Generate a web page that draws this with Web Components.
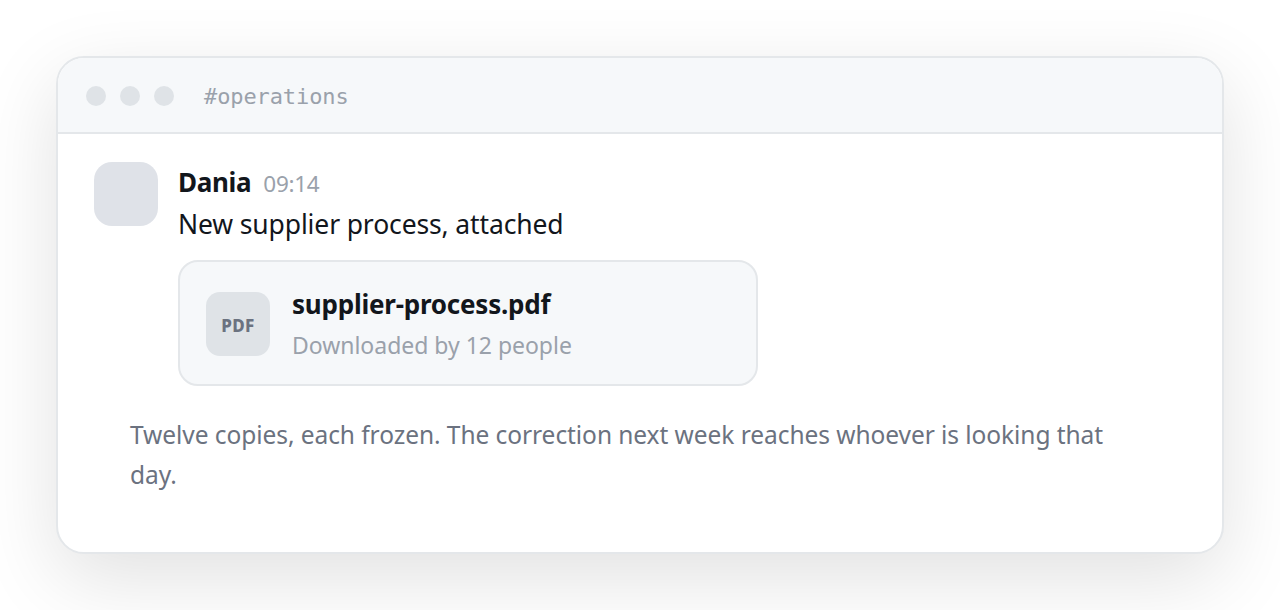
<!DOCTYPE html>
<html lang="en">
<head>
<meta charset="UTF-8">
<title>#operations</title>
<style>
  body {
    margin: 0;
    padding: 56px;
    height: 610px;
    box-sizing: border-box;
    overflow: hidden;
    background: #fff;
    font-family: "Noto Sans", "Open Sans", sans-serif;
    color: #12161c;
  }
</style>
</head>
<body>
  <chat-window channel="#operations">
    <chat-message author="Dania" time="09:14">
      New supplier process, attached
      <file-card slot="attachment" type="PDF" name="supplier-process.pdf">Downloaded by 12 people</file-card>
    </chat-message>
    <chat-note>Twelve copies, each frozen. The correction next week reaches whoever is looking that day.</chat-note>
  </chat-window>

<script>
  class ChatWindow extends HTMLElement {
    constructor() {
      super();
      this.attachShadow({ mode: "open" });
    }

    connectedCallback() {
      this.shadowRoot.innerHTML = `
        <style>
          :host {
            display: block;
            box-sizing: border-box;
            height: 498px;
            border: 2px solid #e4e7ea;
            border-radius: 28px;
            overflow: hidden;
            background: #fff;
            box-shadow: 0 24px 80px rgba(0, 0, 0, 0.12);
          }
          header {
            display: flex;
            align-items: center;
            gap: 14px;
            height: 72px;
            padding: 2px 28px 0;
            background: #f6f8fa;
            border-bottom: 2px solid #e4e7ea;
          }
          .dot {
            width: 20px;
            height: 20px;
            border-radius: 50%;
            background: #dfe3e7;
          }
          .channel {
            margin-left: 16px;
            padding-top: 1px;
            font: 22px/30px "DejaVu Sans Mono", monospace;
            color: #9aa1ab;
            letter-spacing: -0.1px;
          }
          .body {
            padding: 28px 36px;
          }
        </style>
        <header>
          <span class="dot"></span>
          <span class="dot"></span>
          <span class="dot"></span>
          <span class="channel">${this.getAttribute("channel")}</span>
        </header>
        <div class="body"><slot></slot></div>
      `;
    }
  }

  class ChatMessage extends HTMLElement {
    constructor() {
      super();
      this.attachShadow({ mode: "open" });
    }

    connectedCallback() {
      this.shadowRoot.innerHTML = `
        <style>
          :host {
            display: flex;
            align-items: flex-start;
            gap: 20px;
          }
          .avatar {
            flex: none;
            width: 64px;
            height: 64px;
            border-radius: 18px;
            background: #dfe2e8;
          }
          .meta {
            display: flex;
            align-items: baseline;
            gap: 12px;
            height: 41px;
            line-height: 40px;
          }
          .author {
            font-size: 26px;
            font-weight: 700;
            letter-spacing: -0.3px;
          }
          .time {
            font-size: 22.5px;
            color: #9aa1ab;
            letter-spacing: -0.3px;
          }
          .text {
            height: 43px;
            line-height: 42px;
            font-size: 26.5px;
            letter-spacing: -0.13px;
            white-space: nowrap;
          }
          ::slotted(file-card) {
            margin-top: 14px;
          }
        </style>
        <div class="avatar"></div>
        <div>
          <div class="meta">
            <span class="author">${this.getAttribute("author")}</span>
            <span class="time">${this.getAttribute("time")}</span>
          </div>
          <div class="text"><slot></slot></div>
          <slot name="attachment"></slot>
        </div>
      `;
    }
  }

  class FileCard extends HTMLElement {
    constructor() {
      super();
      this.attachShadow({ mode: "open" });
    }

    connectedCallback() {
      this.shadowRoot.innerHTML = `
        <style>
          :host {
            display: flex;
            align-items: center;
            gap: 22px;
            box-sizing: border-box;
            width: 580px;
            height: 126px;
            padding: 2px 26px 0;
            border: 2px solid #e4e7ea;
            border-radius: 20px;
            background: #f6f8fa;
            white-space: nowrap;
          }
          .type {
            display: flex;
            align-items: center;
            justify-content: center;
            box-sizing: border-box;
            width: 64px;
            height: 64px;
            padding-top: 2px;
            border-radius: 14px;
            background: #dfe3e7;
            color: #6b7280;
            font-size: 17px;
            font-weight: 800;
            letter-spacing: 0.4px;
          }
          .name {
            font-size: 26px;
            line-height: 42px;
            font-weight: 700;
            letter-spacing: -0.23px;
          }
          .info {
            font-size: 23px;
            line-height: 40px;
            color: #9aa1ab;
            letter-spacing: -0.02px;
          }
        </style>
        <div class="type">${this.getAttribute("type")}</div>
        <div>
          <div class="name">${this.getAttribute("name")}</div>
          <div class="info"><slot></slot></div>
        </div>
      `;
    }
  }

  class ChatNote extends HTMLElement {
    constructor() {
      super();
      this.attachShadow({ mode: "open" });
    }

    connectedCallback() {
      this.shadowRoot.innerHTML = `
        <style>
          :host {
            display: block;
            margin-top: 29px;
            padding: 0 36px;
            font-size: 24.5px;
            line-height: 40px;
            color: #6b7280;
            letter-spacing: -0.06px;
          }
        </style>
        <slot></slot>
      `;
    }
  }

  customElements.define("chat-window", ChatWindow);
  customElements.define("chat-message", ChatMessage);
  customElements.define("file-card", FileCard);
  customElements.define("chat-note", ChatNote);
</script>
</body>
</html>
